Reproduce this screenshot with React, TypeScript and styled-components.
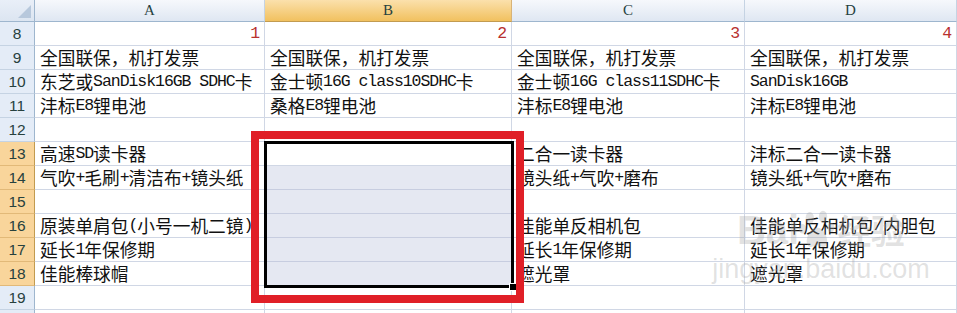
import React from 'react';
import styled, { createGlobalStyle, css } from 'styled-components';

const GlobalStyle = createGlobalStyle`
    html, body {
        margin: 0;
        padding: 0;
        background: #FFF;
        overflow: hidden;
    }
`;

const COLS = ['A', 'B', 'C', 'D'];

// row number -> cell texts for A..D (row 20 only peeks in at the bottom edge)
const ROWS: { n: number; cells: string[] }[] = [
    { n: 8, cells: ['1', '2', '3', '4'] },
    { n: 9, cells: ['全国联保，机打发票', '全国联保，机打发票', '全国联保，机打发票', '全国联保，机打发票'] },
    { n: 10, cells: ['东芝或SanDisk16GB SDHC卡', '金士顿16G class10SDHC卡', '金士顿16G class11SDHC卡', 'SanDisk16GB'] },
    { n: 11, cells: ['沣标E8锂电池', '桑格E8锂电池', '沣标E8锂电池', '沣标E8锂电池'] },
    { n: 12, cells: ['', '', '', ''] },
    { n: 13, cells: ['高速SD读卡器', '', '二合一读卡器', '沣标二合一读卡器'] },
    { n: 14, cells: ['气吹+毛刷+清洁布+镜头纸', '', '镜头纸+气吹+磨布', '镜头纸+气吹+磨布'] },
    { n: 15, cells: ['', '', '', ''] },
    { n: 16, cells: ['原装单肩包(小号一机二镜)', '', '佳能单反相机包', '佳能单反相机包/内胆包'] },
    { n: 17, cells: ['延长1年保修期', '', '延长1年保修期', '延长1年保修期'] },
    { n: 18, cells: ['佳能棒球帽', '', '遮光罩', '遮光罩'] },
    { n: 19, cells: ['', '', '', ''] },
    { n: 20, cells: ['', '', '', ''] },
];

const StyledSheet = styled.div`
    position: relative;
    display: grid;
    grid-template-columns: 35px 230px 247px 233px 212px;
    grid-template-rows: 22px;
    grid-auto-rows: 24px;
    width: 957px;
    height: 313px;
    overflow: hidden;
    font-family: "Noto Sans CJK SC", sans-serif;
    font-size: 17.7px;
    color: #111;
`;

const StyledCorner = styled.div`
    position: relative;
    box-sizing: border-box;
    background: linear-gradient(#e9eff8, #dce5f1);
    border-right: 1px solid #9eb6ce;
    border-bottom: 1px solid #9eb6ce;

    &::after {
        content: '';
        position: absolute;
        right: 3px;
        bottom: 3px;
        border-style: solid;
        border-width: 0 0 13px 13px;
        border-color: transparent transparent #b7c8dc transparent;
    }
`;

const StyledColHeader = styled.div<{ $active?: boolean }>`
    box-sizing: border-box;
    display: flex;
    align-items: center;
    justify-content: center;
    border-right: 1px solid #c5d3e3;
    border-bottom: 1px solid #9eb6ce;
    background: linear-gradient(#f6f8fc, #dfe7f2);
    font-family: "Liberation Serif", serif;
    font-size: 15px;
    color: #27413e;

    ${({ $active }) => $active && css`
        background: linear-gradient(#fbe0ac, #f1c15f);
        border-bottom-color: #c29b50;
        border-right-color: #d8b377;
    `}
`;

const StyledRowHeader = styled.div<{ $active?: boolean }>`
    box-sizing: border-box;
    display: flex;
    align-items: center;
    justify-content: center;
    padding-top: 1px;
    border-right: 1px solid #9eb6ce;
    border-bottom: 1px solid #c5d3e3;
    background: #e4ecf7;
    font-family: "Liberation Sans", sans-serif;
    font-size: 15.5px;
    color: #27413e;

    ${({ $active }) => $active && css`
        background: #f9d59b;
        border-bottom-color: #e2b978;
        border-right-color: #c29b50;
    `}
`;

const StyledCell = styled.div<{ $selected?: boolean; $number?: boolean }>`
    box-sizing: border-box;
    display: flex;
    align-items: flex-end;
    padding: 0 5px 1px 5px;
    border-right: 1px solid #d0d7e5;
    border-bottom: 1px solid #d0d7e5;
    white-space: nowrap;
    line-height: 21px;
    background: ${({ $selected }) => ($selected ? '#e5e8f2' : '#FFF')};
    justify-content: ${({ $number }) => ($number ? 'flex-end' : 'flex-start')};
    color: ${({ $number }) => ($number ? '#b8312f' : '#111')};
    border-bottom-color: ${({ $selected }) => ($selected ? '#c7cde0' : '#d0d7e5')};
`;

// half-width latin run, 8.85px per character like the sheet's song font
const StyledHalf = styled.span`
    font-family: "Liberation Mono", monospace;
    font-size: 16.5px;
    letter-spacing: -1.05px;
`;

const StyledSelection = styled.div`
    position: absolute;
    left: 264px;
    top: 141px;
    width: 250px;
    height: 147px;
    box-sizing: border-box;
    border: 3px solid #000;
    pointer-events: none;
`;

const StyledFillHandle = styled.div`
    position: absolute;
    left: 509px;
    top: 283px;
    width: 6px;
    height: 6px;
    background: #000;
    border: 1px solid #FFF;
`;

const StyledCallout = styled.div`
    position: absolute;
    left: 251px;
    top: 131px;
    width: 273px;
    height: 172px;
    box-sizing: border-box;
    border: 8px solid #e01f27;
    pointer-events: none;
`;

const StyledWatermark = styled.div`
    position: absolute;
    left: 733px;
    top: 208px;
    width: 176px;
    display: flex;
    flex-direction: column;
    align-items: center;
    color: rgba(165, 165, 165, 0.32);
    font-family: "Liberation Sans", sans-serif;
    pointer-events: none;
`;

const StyledWatermarkLogo = styled.div`
    display: flex;
    align-items: center;
    font-size: 40px;
    font-weight: 700;
    line-height: 44px;

    span:last-child {
        font-family: "Noto Sans CJK SC", sans-serif;
        font-size: 34px;
        margin-left: 2px;
    }
`;

const StyledWatermarkUrl = styled.div`
    font-size: 27px;
    line-height: 30px;
    margin-top: 2px;
`;

function renderText(text: string) {
    const parts = text.split(/([\x20-\x7e]+)/).filter(Boolean);
    return parts.map((part, index) =>
        /^[\x20-\x7e]+$/.test(part)
            ? <StyledHalf key={index}>{part}</StyledHalf>
            : <React.Fragment key={index}>{part}</React.Fragment>
    );
}

function Paw() {
    return (
        <svg width="36" height="40" viewBox="0 0 30 32">
            <g fill="currentColor">
                <ellipse cx="9" cy="6" rx="3.5" ry="5" />
                <ellipse cx="20" cy="5" rx="3.5" ry="5" />
                <ellipse cx="3" cy="15" rx="3" ry="4" />
                <ellipse cx="26.5" cy="14" rx="3" ry="4" />
                <path d="M15 14 C9 14 5 24 7 28 C9 32 13 29 15 29 C17 29 21 32 23 28 C25 24 21 14 15 14 Z" />
            </g>
        </svg>
    );
}

function App() {
    return (
        <>
            <GlobalStyle />
            <StyledSheet>
                <StyledCorner />
                {COLS.map((col) => (
                    <StyledColHeader key={col} $active={col === 'B'}>{col}</StyledColHeader>
                ))}
                {ROWS.map((row) => {
                    const active = row.n >= 13 && row.n <= 18;
                    return (
                        <React.Fragment key={row.n}>
                            <StyledRowHeader $active={active}>{row.n < 20 ? row.n : null}</StyledRowHeader>
                            {row.cells.map((text, i) => (
                                <StyledCell
                                    key={`${row.n}${i}`}
                                    $number={row.n === 8}
                                    $selected={i === 1 && row.n >= 14 && row.n <= 18}
                                >
                                    {renderText(text)}
                                </StyledCell>
                            ))}
                        </React.Fragment>
                    );
                })}
                <StyledWatermark>
                    <StyledWatermarkLogo>
                        <span>Bai</span>
                        <Paw />
                        <span>经验</span>
                    </StyledWatermarkLogo>
                    <StyledWatermarkUrl>jingyan.baidu.com</StyledWatermarkUrl>
                </StyledWatermark>
                <StyledSelection />
                <StyledFillHandle />
                <StyledCallout />
            </StyledSheet>
        </>
    );
}

export default App;
